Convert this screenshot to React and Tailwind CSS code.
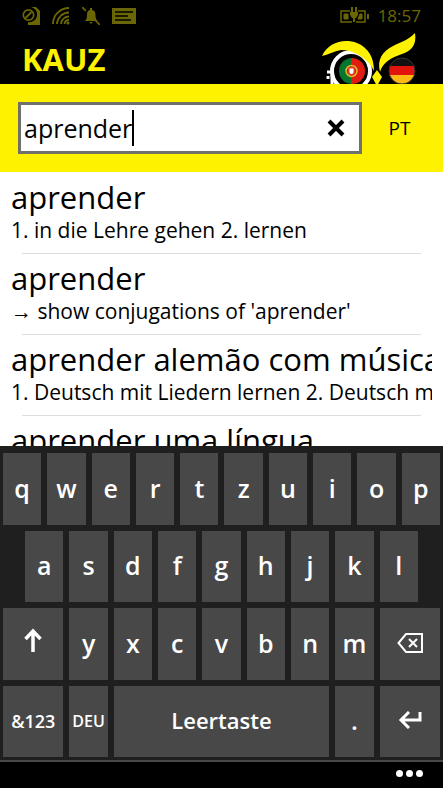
import { useState } from 'react';

const results = [
  { word: 'aprender', text: '1. in die Lehre gehen 2. lernen' },
  { word: 'aprender', text: "→ show conjugations of 'aprender'" },
  { word: 'aprender alemão com música', text: '1. Deutsch mit Liedern lernen 2. Deutsch mit' },
  { word: 'aprender uma língua' },
];

const topRow = ['q', 'w', 'e', 'r', 't', 'z', 'u', 'i', 'o', 'p'];
const homeRow = ['a', 's', 'd', 'f', 'g', 'h', 'j', 'k', 'l'];
const bottomRow = ['y', 'x', 'c', 'v', 'b', 'n', 'm'];

function StatusBar() {
  return (
    <div className="flex h-8 items-center justify-between pl-[22px] pr-[22px] text-[#6b6604]">
      <div className="flex items-center gap-3">
        {/* SIM */}
        <svg width="18" height="18" viewBox="0 0 18 18" fill="none">
          <path d="M9 0h5l4 4v14H6v-3a7 7 0 0 0 3-15z" fill="currentColor" />
          <circle cx="6.5" cy="8" r="7" fill="#000" />
          <circle cx="6.5" cy="8" r="5.2" stroke="currentColor" strokeWidth="1.7" />
          <path d="M3.500 11l6-6" stroke="currentColor" strokeWidth="2" />
        </svg>
        {/* Wi-Fi */}
        <svg width="18" height="18" viewBox="0 0 18 18" fill="none" stroke="currentColor" strokeWidth="1.8">
          <path d="M1 17A16 16 0 0 1 17 1M5 17A12 12 0 0 1 17 5.500M9 17a8 8 0 0 1 8-7.500" />
          <path d="M12.500 17a4.500 4.500 0 0 1 4.500-4" />
          <circle cx="16" cy="16" r="1.500" fill="currentColor" stroke="none" />
        </svg>
        {/* Muted bell */}
        <svg width="18" height="18" viewBox="0 0 18 18">
          <path d="M8 1h2v2c3 .6 3.500 3 3.500 5 0 3 .5 4 2 6H3c1.500-2 2-3 2-6 0-2 .3-4.400 3-5zM7.500 15h3a1.500 1.500 0 0 1-3 0z" fill="currentColor" />
          <path d="M0 0l4 4M13 13l5 5" stroke="currentColor" strokeWidth="1.700" />
        </svg>
        {/* Message */}
        <svg width="24" height="16" viewBox="0 0 24 16">
          <path d="M0 0h24v16H0z" fill="currentColor" />
          <path d="M3 4h18M3 8h13M3 12h16" stroke="#000" strokeWidth="1.700" />
        </svg>
      </div>
      <div className="flex items-center gap-2">
        <svg width="30" height="18" viewBox="0 0 30 18" fill="none" stroke="currentColor" strokeWidth="1.500">
          <path d="M10 4H1v11h11M18 4h7v11h-9" />
          <path d="M4 7h4v5H4zM20 7h2v5h-4z" fill="currentColor" strokeWidth="1" />
          <path d="M12 0v5M16 0v5M14 11v4" strokeWidth="2" />
          <path d="M10 5h8v3l-2 3h-4l-2-3z" fill="currentColor" stroke="none" />
          <path d="M28 7v5" strokeWidth="2" />
        </svg>
        <span className="text-[17px] leading-5">18:57</span>
      </div>
    </div>
  );
}

function OwlLogo() {
  return (
    <svg width="98" height="52" viewBox="320 32 98 52" aria-label="Kauz">
      <defs>
        <clipPath id="pt"><circle cx="352" cy="71" r="13" /></clipPath>
        <clipPath id="de"><circle cx="402" cy="71" r="13" /></clipPath>
      </defs>
      {/* left eye */}
      <path d="M332 68v4h-5M328 76v3M332 75v9" stroke="#fff" strokeWidth="3" fill="none" />
      <circle cx="351" cy="71" r="19" fill="#000" stroke="#fff" strokeWidth="4" />
      <g clipPath="url(#pt)">
        <path d="M338 57h14v28h-14z" fill="#08752f" />
        <path d="M351 57h15v28h-15z" fill="#e01c13" />
      </g>
      <circle cx="351.500" cy="71" r="5.500" fill="none" stroke="#e3bd20" strokeWidth="1.500" />
      <path d="M348 67h7v5q0 3-3.500 4-3.500-1-3.500-4z" fill="#e93a2a" />
      <path d="M349.500 68.500h4v3.500q0 2-2 2-2 0-2-2z" fill="#fff" />
      {/* right eye */}
      <g clipPath="url(#de)">
        <path d="M389 57h26v10h-26z" fill="#111" />
        <path d="M389 66h26v9h-26z" fill="#e0140c" />
        <path d="M389 75h26v10h-26z" fill="#fdb913" />
      </g>
      <circle cx="402" cy="71" r="13" fill="none" stroke="#333" />
      {/* brows and beak */}
      <path d="M322 56C328 43 343 38 357 43C369 48 374 58 374 71C368 58 354 50 341 50C334 51 328 55 322 56z" fill="#fff200" />
      <path d="M380 72C377 59 382 52 393 46C401 42 408 40 415 33C417 45 411 51 402 54C391 58 383 62 380 72z" fill="#fff200" />
      <path d="M377 70l5 7-5 9-5-9z" fill="#fff200" />
    </svg>
  );
}

function Key({ children, className = 'col-span-2 pb-0.5 text-[25px]', label, onClick }) {
  return (
    <button
      type="button"
      aria-label={label}
      onClick={onClick}
      className={`flex items-center justify-center bg-[#484848] font-semibold leading-8 text-white active:bg-[#fff200] active:text-black ${className}`}
    >
      {children}
    </button>
  );
}

function Keyboard({ onType, onDelete }) {
  return (
    <div className="grid h-[314px] shrink-0 grid-cols-20 grid-rows-4 gap-1.5 bg-[#1f1f1f] px-[3px] pb-[3px] pt-[7px]">
      {topRow.map((k) => <Key key={k} onClick={() => onType(k)}>{k}</Key>)}
      {homeRow.map((k) => (
        <Key
          key={k}
          onClick={() => onType(k)}
          className={k === 'a' ? 'col-span-2 col-start-2 pb-0.5 text-[25px]' : 'col-span-2 pb-0.5 text-[25px]'}
        >
          {k}
        </Key>
      ))}

      <Key label="Shift" className="col-span-3 col-start-1 pb-2">
        <svg width="18" height="24" viewBox="0 0 18 24" fill="none" stroke="currentColor" strokeWidth="3.500">
          <path d="M9 24V3M1.500 11L9 3l7.500 8" />
        </svg>
      </Key>
      {bottomRow.map((k) => <Key key={k} onClick={() => onType(k)}>{k}</Key>)}
      <Key label="Backspace" className="col-span-3 pb-0.5" onClick={onDelete}>
        <svg width="26" height="20" viewBox="0 0 26 20" fill="none" stroke="currentColor" strokeWidth="2">
          <path d="M9 1h16v18H9L1.500 10z" />
          <path d="M12 6l8 8M20 6l-8 8" />
        </svg>
      </Key>

      <Key className="col-span-3 text-[18px]">&amp;123</Key>
      <Key className="col-span-2 text-[16px]">DEU</Key>
      <Key className="col-span-10 pb-0.5 text-[22px]" onClick={() => onType(' ')}>Leertaste</Key>
      <Key onClick={() => onType('.')}>.</Key>
      <Key label="Enter" className="col-span-3 pb-0.5">
        <svg width="24" height="18" viewBox="0 0 24 18" fill="none" stroke="currentColor" strokeWidth="3">
          <path d="M22 1v8H3M11 1L3 9l8 8" />
        </svg>
      </Key>
    </div>
  );
}

export default function App() {
  const [query, setQuery] = useState('aprender');

  return (
    <main className="flex h-screen flex-col overflow-hidden bg-black font-['Open_Sans','Noto_Sans',sans-serif] text-black">
      {/* HEADER */}
      <header className="shrink-0">
        <StatusBar />
        <div className="flex h-[52px] items-start justify-between pl-[22px] pr-[25px]">
          <h1 className="pt-[7px] text-[31px] font-bold leading-10 text-[#fff200]">KAUZ</h1>
          <OwlLogo />
        </div>
      </header>

      {/* SEARCH */}
      <form className="flex h-[88px] shrink-0 items-center bg-[#fff200] pl-[18px]" onSubmit={(e) => e.preventDefault()}>
        <div className="flex h-[52px] min-w-0 flex-1 items-center border-[3px] border-[#71716b] bg-white pl-[3px] pr-3">
          <input
            type="text"
            aria-label="Search"
            value={query}
            onChange={(e) => setQuery(e.target.value)}
            className="field-sizing-content min-w-0 text-[25px] leading-9 caret-transparent outline-none"
          />
          <span className="h-9 w-0.5 shrink-0 bg-black" />
          <button type="button" aria-label="Clear" onClick={() => setQuery('')} className="ml-auto p-0.5">
            <svg width="18" height="18" viewBox="0 0 18 18" fill="none" stroke="currentColor" strokeWidth="4">
              <path d="M2 2l14 14M16 2L2 16" />
            </svg>
          </button>
        </div>
        <button type="button" className="w-[81px] pr-1.5 text-[19px]">PT</button>
      </form>

      {/* RESULTS */}
      <ul className="min-h-0 flex-1 overflow-hidden bg-white px-[11px] pt-px">
        {results.map((r) => (
          <li key={r.word + r.text} className="overflow-hidden whitespace-nowrap pt-1">
            <h2 className="text-[31px] leading-10">{r.word}</h2>
            {r.text && (
              <>
                <p className="-mt-1 h-10 text-[21px] leading-[34px]">{r.text}</p>
                <hr className="mx-[11px] border-[#dedede]" />
              </>
            )}
          </li>
        ))}
      </ul>

      <Keyboard onType={(k) => setQuery(query + k)} onDelete={() => setQuery(query.slice(0, -1))} />

      {/* APP BAR */}
      <footer className="flex h-7 shrink-0 items-start justify-end border-t-2 border-[#484848] pr-[18px] pt-1.5">
        <button type="button" aria-label="More" className="flex gap-[3px] p-0.5">
          <span className="size-[7px] rounded-full bg-white" />
          <span className="size-[7px] rounded-full bg-white" />
          <span className="size-[7px] rounded-full bg-white" />
        </button>
      </footer>
    </main>
  );
}
